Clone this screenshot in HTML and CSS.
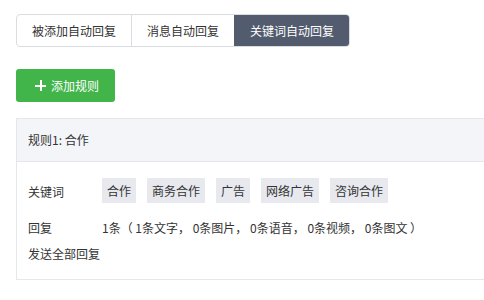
FILE: index.html
```html
<!DOCTYPE html>
<html lang="zh-CN">
<head>
    <meta charset="UTF-8">
    <title>关键词自动回复</title>
    <link rel="stylesheet" href="styles.css">
</head>
<body>
    <!-- Tabs -->
    <div class="tabs">
        <a class="tab" href="#">被添加自动回复</a>
        <a class="tab" href="#">消息自动回复</a>
        <a class="tab active" href="#">关键词自动回复</a>
    </div>

    <button class="btn-add"><span class="plus"></span>添加规则</button>

    <!-- Rule card -->
    <div class="rule">
        <div class="rule-head">规则1: 合作</div>
        <div class="rule-body">
            <div class="row keywords">
                <span class="label">关键词</span>
                <div class="tags">
                    <span class="tag">合作</span>
                    <span class="tag">商务合作</span>
                    <span class="tag">广告</span>
                    <span class="tag">网络广告</span>
                    <span class="tag">咨询合作</span>
                </div>
            </div>
            <div class="row">
                <span class="label">回复</span>
                <span>1条（ 1条文字， 0条图片， 0条语音， 0条视频， 0条图文 ）</span>
            </div>
            <div class="row send">发送全部回复</div>
        </div>
    </div>
</body>
</html>
```

FILE: styles.css
```css
/* Base */
body {
    margin: 0;
    padding: 14px 0 14px 16px;
    font-family: "Noto Sans CJK SC", "Liberation Sans", sans-serif;
    font-size: 12px;
    color: #333;
    background: #fff;
    overflow: hidden;
}
/* Tabs */
.tabs {
    display: inline-flex;
    border: 1px solid #d9dde2;
    border-radius: 4px;
    overflow: hidden;
}
.tab {
    display: block;
    padding: 0 15px;
    line-height: 31px;
    color: #333;
    text-decoration: none;
    border-left: 1px solid #d9dde2;
}
.tab:first-child {
    border-left: none;
}
.tab.active {
    background: #525c6e;
    color: #fff;
    border-left-color: #525c6e;
}
/* Add button */
.btn-add {
    display: flex;
    align-items: center;
    margin-top: 22px;
    width: 99px;
    height: 33px;
    padding: 0 0 0 19px;
    border: none;
    border-radius: 3px;
    background: #41b54a;
    color: #fff;
    font-family: inherit;
    font-size: 12px;
}
.plus {
    position: relative;
    width: 11px;
    height: 11px;
    margin-right: 5px;
}
.plus::before, .plus::after {
    content: "";
    position: absolute;
    background: #fff;
}
.plus::before {
    left: 0;
    right: 0;
    top: 5px;
    height: 2px;
}
.plus::after {
    top: 0;
    bottom: 0;
    left: 5px;
    width: 2px;
}
/* Rule card */
.rule {
    margin-top: 16px;
    border: 1px solid #e4e7eb;
    border-right: none;
}
.rule-head {
    background: #f4f5f9;
    border-bottom: 1px solid #e4e7eb;
    height: 42px;
    line-height: 42px;
    padding-left: 11px;
}
.rule-body {
    padding: 14px 11px 12px;
}
.row {
    display: flex;
    align-items: center;
    line-height: 26px;
}
.label {
    width: 74px;
    flex-shrink: 0;
}
.keywords {
    margin-bottom: 10px;
}
.keywords .label {
    padding-top: 3px;
}
.tags {
    display: flex;
    gap: 11px;
}
.tag {
    background: #e7e9ee;
    padding: 0 5px;
    line-height: 25px;
}
```
